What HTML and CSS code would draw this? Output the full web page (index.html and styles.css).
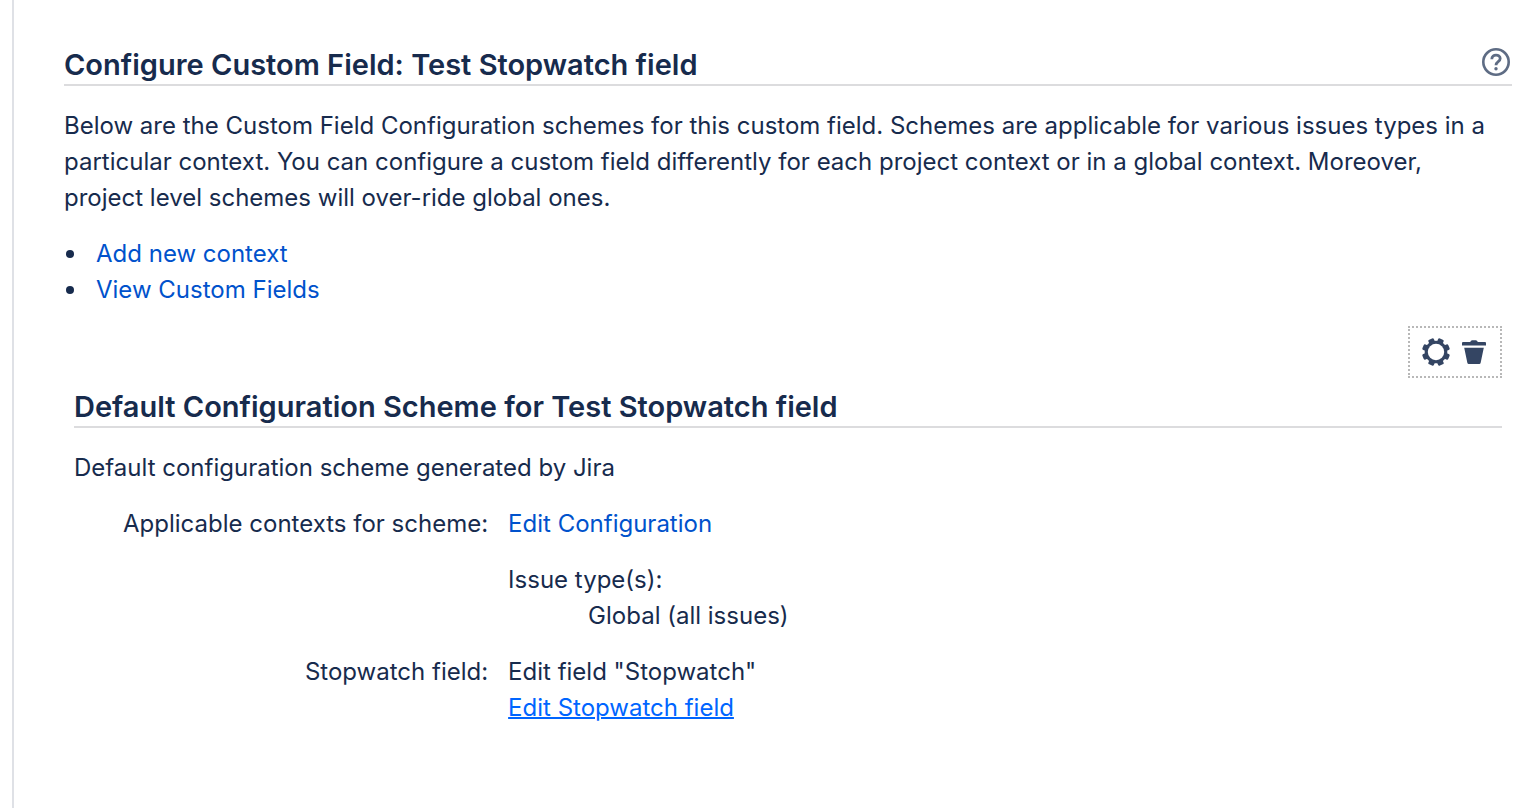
FILE: index.html
```html
<!DOCTYPE html>
<html lang="en">
<head>
<meta charset="utf-8">
<title>Configure Custom Field</title>
<link rel="stylesheet" href="styles.css">
</head>
<body>
<main class="content">
  <header class="heading">
    <h1 class="title">Configure Custom Field: Test Stopwatch field</h1>
    <a class="help" href="#" aria-label="Get help">
      <svg class="help-icon" viewBox="0 0 30 30" fill="none" stroke="currentColor">
        <circle cx="15" cy="15" r="12.7" stroke-width="2.6"/>
        <path d="M10.8 12.200c0-5.400 8.400-5.200 8.400-.6 0 3.200-4.200 3-4.200 6.600" stroke-width="2.800"/>
        <circle cx="15" cy="21.8" r="1.700" fill="currentColor" stroke="none"/>
      </svg>
    </a>
  </header>
  <p class="text intro">Below are the Custom Field Configuration schemes for this custom field. Schemes are applicable for various issues types in a particular context. You can configure a custom field differently for each project context or in a global context. Moreover, project level schemes will over-ride global ones.</p>
  <ul class="links">
    <li><a href="#">Add new context</a></li>
    <li><a href="#">View Custom Fields</a></li>
  </ul>
  <section class="scheme">
    <div class="tools">
      <button class="tool" type="button" aria-label="Edit scheme">
        <svg class="tool-icon" viewBox="0 0 28 28">
          <g fill="currentColor" transform="rotate(22.5 14 14)">
            <rect x="11" y="0" width="6" height="28" rx="1.500"/>
            <rect x="11" y="0" width="6" height="28" rx="1.500" transform="rotate(45 14 14)"/>
            <rect x="11" y="0" width="6" height="28" rx="1.500" transform="rotate(90 14 14)"/>
            <rect x="11" y="0" width="6" height="28" rx="1.500" transform="rotate(135 14 14)"/>
            <circle cx="14" cy="14" r="11.3"/>
          </g>
          <circle cx="14" cy="14" r="8.200" fill="#fff"/>
        </svg>
      </button>
      <button class="tool" type="button" aria-label="Delete scheme">
        <svg class="tool-icon" viewBox="0 0 28 28" fill="currentColor">
          <path d="M3 4h7.200l.8-1.200a1.500 1.500 0 0 1 1.200-.6h3.600a1.500 1.500 0 0 1 1.200.6l.8 1.200H25a1 1 0 0 1 1 1v2.600H2V5a1 1 0 0 1 1-1z"/>
          <path d="M4.200 9.800h19.600L20.600 25a1.400 1.400 0 0 1-1.400 1H8.800a1.400 1.400 0 0 1-1.400-1z"/>
        </svg>
      </button>
    </div>
    <h2 class="title title-ruled">Default Configuration Scheme for Test Stopwatch field</h2>
    <p class="text">Default configuration scheme generated by Jira</p>
    <dl class="fields">
      <dt>Applicable contexts for scheme:</dt>
      <dd>
        <a href="#">Edit Configuration</a>
        <dl class="types">
          <dt>Issue type(s):</dt>
          <dd class="type">Global (all issues)</dd>
        </dl>
      </dd>
      <dt>Stopwatch field:</dt>
      <dd>Edit field "Stopwatch"<br><a class="active" href="#">Edit Stopwatch field</a></dd>
    </dl>
  </section>
</main>
</body>
</html>
```
FILE: styles.css
```css
* { box-sizing: border-box; }
body {
  margin: 0 0 0 12px;
  min-height: 100vh;
  border-left: 2px solid #dfe1e6;
  background: #fff;
  color: #172b4d;
  font: 24px/36px Inter, "Liberation Sans", sans-serif;
}
a { color: #0052cc; text-decoration: none; }
a.active {
  color: #0065ff;
  text-decoration: underline;
  text-decoration-thickness: 2px;
}
.content { padding: 44px 14px 40px 50px; }
.heading {
  display: flex;
  justify-content: space-between;
  border-bottom: 2px solid #dcdcde;
}
.title {
  margin: 0;
  padding-top: 2px;
  font-size: 29px;
  line-height: 38px;
  font-weight: 600;
}
.title-ruled { border-bottom: 2px solid #dcdcde; }
.help { height: 30px; margin: 3px 1px 0 0; color: #5e6c84; }
.help-icon { display: block; width: 30px; height: 30px; }
.text { margin: 22px 0 20px; }
.intro { padding-right: 16px; }
.links { margin: 0; padding: 0 0 0 2px; list-style: none; }
.links li { display: flex; align-items: center; gap: 22px; }
.links li::before {
  content: "";
  width: 8px;
  height: 8px;
  border-radius: 50%;
  background: #172b4d;
}
.scheme { padding: 18px 10px; }
.tools {
  display: flex;
  gap: 10px;
  width: max-content;
  margin: 0 0 8px auto;
  padding: 10px 12px;
  border: 2px dotted #b8b8b8;
}
.tool { padding: 0; border: 0; background: none; color: #344563; }
.tool-icon { display: block; width: 28px; height: 28px; }
.fields {
  display: grid;
  grid-template-columns: 29% 1fr;
  gap: 20px;
  margin: 0;
}
.fields > dt { text-align: right; }
dd { margin: 0; }
.types { margin: 20px 0 0; }
.type { padding-left: 80px; }
```
